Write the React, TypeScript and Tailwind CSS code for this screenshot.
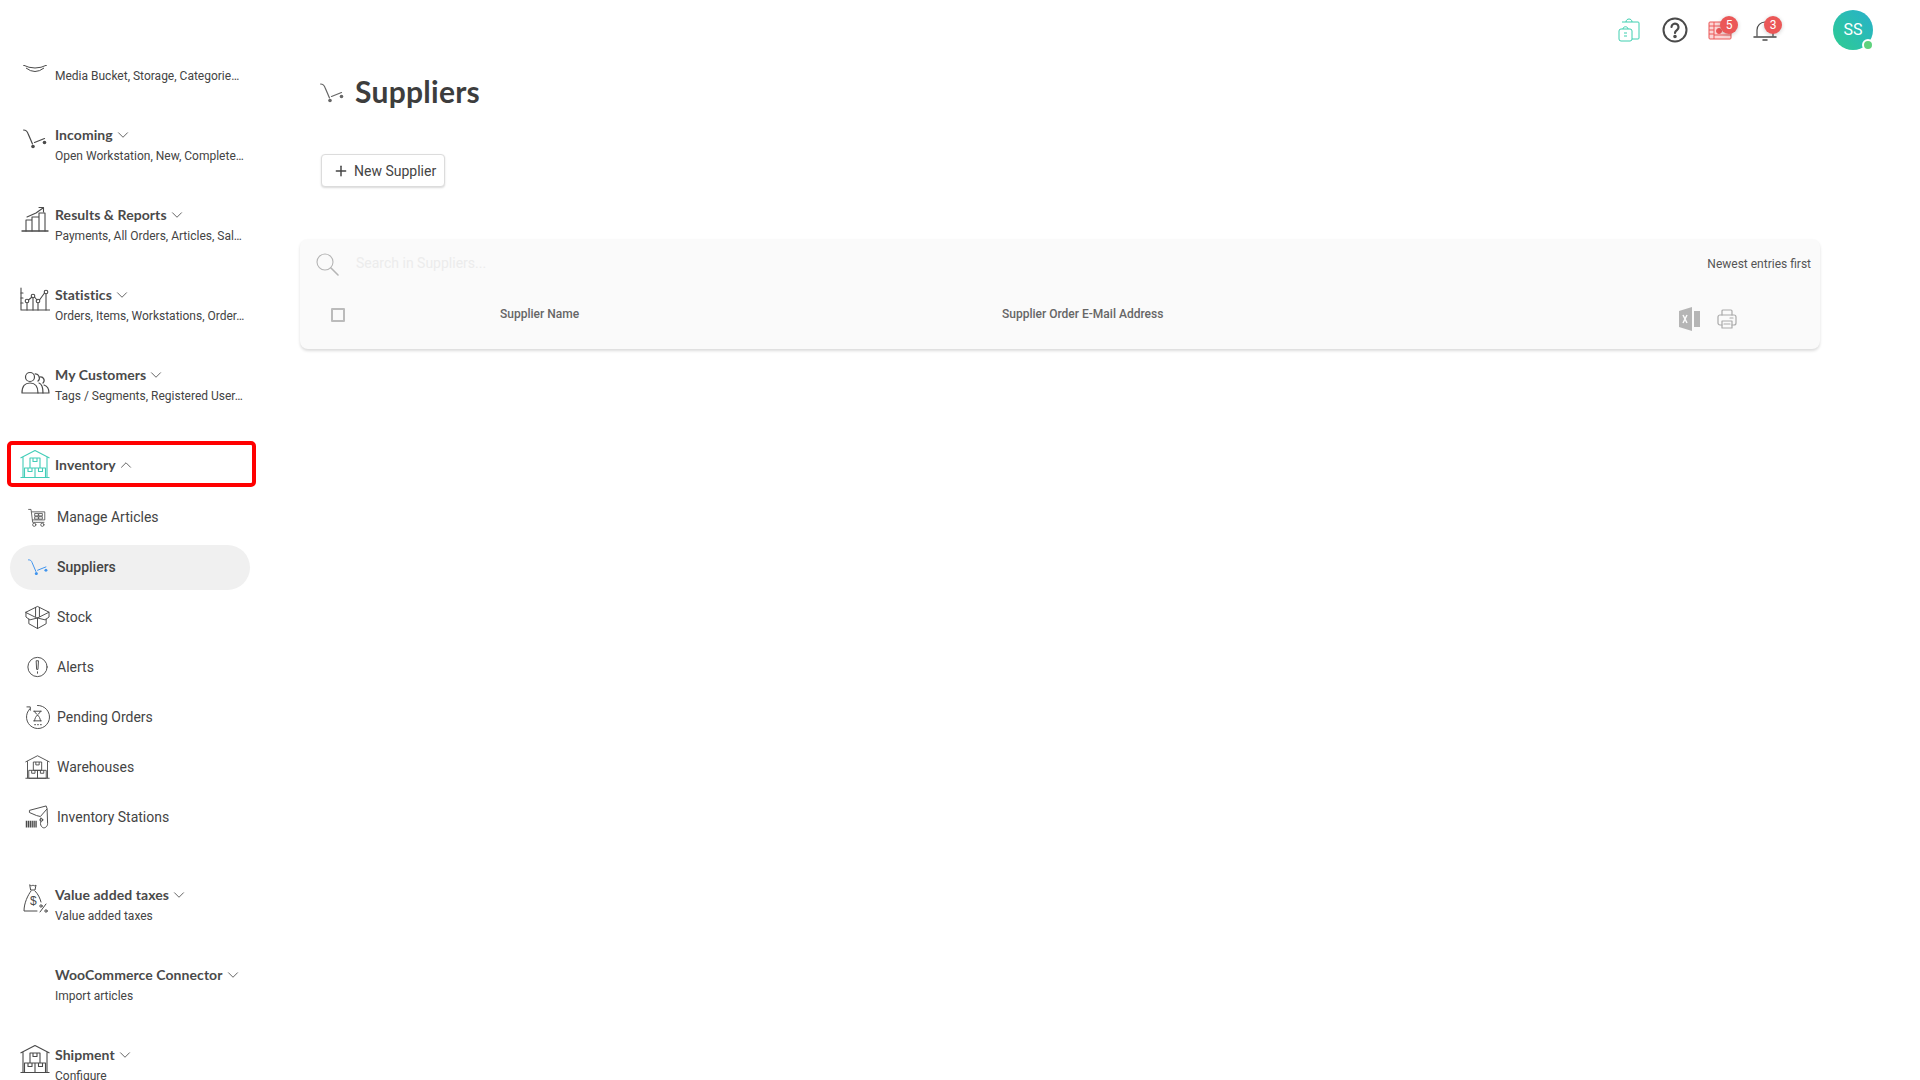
import { ChevronDown, ChevronUp, Plus } from "lucide-react";
import type { ReactNode } from "react";

const INK = "#4a4a4a";

function Svg({ w = 30, h = 30, vb = "0 0 30 30", color = INK, sw = 1, children }: { w?: number; h?: number; vb?: string; color?: string; sw?: number; children: ReactNode }) {
  return (
    <svg width={w} height={h} viewBox={vb} fill="none" stroke={color} strokeWidth={sw} strokeLinecap="round" strokeLinejoin="round">
      {children}
    </svg>
  );
}

function CartIcon({ color = INK, w = 24 }: { color?: string; w?: number }) {
  return (
    <svg width={w} height={(w * 20) / 24} viewBox="0 0 24 20" fill="none" stroke={color} strokeWidth="1.200" strokeLinecap="round">
      <path d="M0.600 1C3 1 4 1.800 5 4.500L9.500 15" />
      <path d="M11.500 13.500L21.500 9.500" />
      <circle cx="10" cy="17.500" r="1.800" fill={color} stroke="none" />
      <circle cx="21.500" cy="13.500" r="1.800" fill={color} stroke="none" />
    </svg>
  );
}

function ChartIcon() {
  return (
    <Svg sw={1.1}>
      <path d="M2 27h26" strokeWidth="1.400" />
      <path d="M6 27V16h6v11M12 27V13h7v14M19 27V9h6v18" />
      <path d="M7 13l9-4 7-5M19 3.500h4.500V8" />
    </Svg>
  );
}

function StatsIcon() {
  return (
    <Svg sw={1.1}>
      <path d="M1 4v22h29" />
      <path d="M1 9h2M1 14h2M1 19h2" />
      <path d="M8.500 16l3.500-3M14.500 13l2.500 3M19.500 16l5-7" />
      <circle cx="7" cy="17" r="1.800" />
      <circle cx="13" cy="12" r="1.800" />
      <circle cx="18" cy="17" r="1.800" />
      <circle cx="26" cy="8" r="1.800" />
      <path d="M7 19v7M13 14v12M18 19v7M26 10v16" />
    </Svg>
  );
}

function PeopleIcon() {
  return (
    <Svg sw={1.2}>
      <circle cx="10" cy="13" r="4.500" />
      <path d="M2 29c0-7 3-10 8-10s8 3 8 10z" />
      <path d="M15 10a4 4 0 0 1 3 7M19 19c3 1 4 5 4 10h-5" />
      <path d="M20 13a3.500 3.500 0 0 1 3 6M24 21c3 1 5 4 5 8h-6" />
    </Svg>
  );
}

function WarehouseIcon({ color = INK, size = 30 }: { color?: string; size?: number }) {
  return (
    <svg width={size} height={size} viewBox="0 0 30 30" fill="none" stroke={color} strokeWidth="1.100" strokeLinejoin="round">
      <path d="M0.500 9L15 1.500 29.500 9M3 8v20.500M27 8v20.500M0.500 28.500h29" />
      <path d="M10 9h10v10H10zM4.500 19h10.500v9.500H4.500zM15 19h10.500v9.500H15z" />
      <path d="M13 9v3.500h4V9M8 19v3.500h4V19M18.500 19v3.500h4V19" />
    </svg>
  );
}

function BasketIcon() {
  return (
    <Svg w={21} h={21} vb="0 0 26 26">
      <path d="M2 3h3l2 16h14" />
      <path d="M6 6h16v10H7" />
      <path d="M10 8h4v3h-4zM15 8h4v3h-4zM10 12h4v3h-4zM15 12h4v3h-4z" />
      <circle cx="9" cy="22" r="2" />
      <circle cx="19" cy="22" r="2" />
    </Svg>
  );
}

function BoxIcon() {
  return (
    <Svg w={26} h={26} vb="0 0 26 26">
      <path d="M1 8l12-6 12 6-12 6z" />
      <path d="M1 8v5l4 3 8-2 8 2 4-3V8" />
      <path d="M4 15v5l9 5 9-5v-5M13 14v11" />
      <path d="M11 3v9.500M15 3v9.500" />
    </Svg>
  );
}

function AlertIcon() {
  return (
    <Svg w={26} h={26} vb="0 0 26 26">
      <circle cx="13" cy="13" r="10" />
      <path d="M12 6.500h2l-0.500 9h-1zM13 18v1.500" />
    </Svg>
  );
}

function PendingIcon() {
  return (
    <Svg w={26} h={26} vb="0 0 26 26">
      <path d="M5 4.500A12 12 0 1 0 13 1" />
      <path d="M2 2.500h3.500V6" />
      <path d="M9 7h8M9 17h8M10 7c0 3 6 4 6 10M16 7c0 3-6 4-6 10" />
      <path d="M10 21h1M13 21h1M16 21h1" />
    </Svg>
  );
}

function ScannerIcon() {
  return (
    <Svg w={26} h={26} vb="0 0 26 26">
      <path d="M5 6L22 1.500l1 3-7 8-4-1-7-3z" />
      <path d="M23 5l0.500 15c0 3-3 5-5 4-2-1-3-4-2-6l0-4" />
      <circle cx="17" cy="16" r="1.500" />
      <path d="M1.500 17v7M3.500 17v7M5.500 17v7M7.500 17v7M9.500 17v7M11.500 17v7" strokeWidth="1.400" strokeLinecap="butt" />
    </Svg>
  );
}

function MoneyIcon() {
  return (
    <Svg w={26} h={30} vb="0 0 26 30">
      <path d="M8 1c1 1 2 1 3 0 1 1 2 1 3 0l-1 5H9z" />
      <path d="M9 7C6 11 2 19 2 27h13" />
      <path d="M13 7c3 3 5 7 6 11" />
      <text x="8" y="21" fontSize="12" fill={INK} stroke="none" fontFamily="Liberation Sans">$</text>
      <path d="M18 28l6-8" />
      <circle cx="19" cy="22" r="1.200" />
      <circle cx="24" cy="27" r="1.200" />
    </Svg>
  );
}

function ExcelIcon() {
  return (
    <svg width="21" height="24" viewBox="0 0 21 24">
      <path d="M0 4l13-4v24L0 20z" fill="#b5b5b5" />
      <rect x="15" y="4" width="6" height="16" fill="#b5b5b5" />
      <path d="M4 8l4 8M8 8l-4 8" stroke="#fafafa" strokeWidth="1.500" />
    </svg>
  );
}

function PrinterIcon() {
  return (
    <Svg w={20} h={20} vb="0 0 20 20" color="#aaa" sw={1.2}>
      <path d="M5 6V2a1 1 0 0 1 1-1h8a1 1 0 0 1 1 1v4" />
      <path d="M5 16H3a2 2 0 0 1-2-2V8a2 2 0 0 1 2-2h14a2 2 0 0 1 2 2v6a2 2 0 0 1-2 2h-2" />
      <path d="M5 12h10v7H5zM7 15h6M13 9h3" />
    </Svg>
  );
}

function Badge({ n, className }: { n: number; className: string }) {
  return (
    <span className={`absolute top-0 flex h-[18px] w-[18px] items-center justify-center rounded-full bg-[#eb5757] text-[12px] leading-none text-white shadow-[0_1px_4px_rgba(0,0,0,0.2)] ${className}`}>
      {n}
    </span>
  );
}

function TopBar() {
  return (
    <header className="flex h-[65px] shrink-0 items-center pb-[5px] pl-[1615px]">
      <span className="mr-[18px] flex h-[28px] w-[28px] items-center justify-center">
        <svg width="22" height="24" viewBox="0 0 22 24" fill="none" stroke="#3ecfb0" strokeWidth="1">
          <path d="M4 4h16a1 1 0 0 1 1 1v15a1 1 0 0 1-1 1h-6" />
          <path d="M8 4c0-4 6-4 6 0" />
          <rect x="1" y="11" width="13" height="12" rx="2" />
          <path d="M5 11c0-3 5-3 5 0M6 15h3M6 18h3" />
        </svg>
      </span>
      <span className="mr-[17px] flex h-[28px] w-[28px] items-center justify-center">
        <svg width="26" height="26" viewBox="0 0 26 26" fill="none" stroke="#4a4a4a" strokeWidth="2" strokeLinecap="round">
          <circle cx="13" cy="13" r="11.500" />
          <path d="M9.500 10a3.500 3.500 0 1 1 5.500 3c-1.300 1-2 1.500-2 3" strokeWidth="2.200" />
          <circle cx="13" cy="19.500" r="0.800" fill="#4a4a4a" />
        </svg>
      </span>
      <span className="relative mr-[17px] flex h-[28px] w-[28px] items-center justify-center">
        <svg width="24" height="20" viewBox="0 0 24 20" fill="#fbd5d5" stroke="#eb5757" strokeWidth="1">
          <rect x="1" y="2" width="22" height="17" rx="1" />
          <path d="M6 2v17M1 6h5M1 10h5M1 14h5M6 6h17M6 15h17" />
          <circle cx="11" cy="11" r="2.500" fill="#eb5757" />
        </svg>
        <Badge n={5} className="right-[-4px]" />
      </span>
      <span className="relative flex h-[28px] w-[28px] items-center justify-center">
        <svg width="24" height="24" viewBox="0 0 24 24" fill="none" stroke="#4a4a4a" strokeWidth="1.200" strokeLinecap="round">
          <path d="M4 18v-6a8 8 0 0 1 16 0v6" />
          <path d="M1 19h22" strokeWidth="1.500" />
          <path d="M10 22h4" strokeWidth="1.500" />
        </svg>
        <Badge n={3} className="right-[-3px]" />
      </span>
      <div className="relative ml-[54px] flex h-[40px] w-[40px] items-center justify-center rounded-full bg-gradient-to-tr from-[#30cc8f] to-[#2ab0ca] text-[16px] text-white">
        SS
        <span className="absolute right-[-1px] bottom-[-1px] h-[12px] w-[12px] rounded-full border-2 border-white bg-[#5fd27d]" />
      </div>
    </header>
  );
}

function NavGroup({ icon, title, sub, height = "h-[80px]" }: { icon?: ReactNode; title?: string; sub: string; height?: string }) {
  return (
    <div className={`flex shrink-0 pl-[20px] ${height}`}>
      <span className="mr-[5px] flex h-[30px] w-[30px] shrink-0 items-center justify-center">{icon}</span>
      <div className="min-w-0">
        <div className="flex h-[20px] items-center text-[14px] font-bold tracking-[0.07px] text-[#4a4a4a] [font-family:Lato,sans-serif]">
          {title}
          {title && <ChevronDown className="ml-[1px] mt-[1px] h-[18px] w-[18px] text-[#555]" strokeWidth={1.2} />}
        </div>
        <div className="mt-[2px] whitespace-nowrap text-[12px] leading-[20px] text-[#444]">{sub}</div>
      </div>
    </div>
  );
}

function SubItem({ icon, label, active }: { icon: ReactNode; label: string; active?: boolean }) {
  return (
    <div className="flex h-[50px] shrink-0 items-center px-[10px]">
      <div className={`flex h-[45px] w-[240px] items-center rounded-full pl-[15px] text-[14px] text-[#444] ${active ? "bg-[#f0f0f0] font-medium" : ""}`}>
        <span className="mr-[7px] flex h-[26px] w-[25px] items-center justify-center">{icon}</span>
        {label}
      </div>
    </div>
  );
}

function Sidebar() {
  return (
    <aside className="flex w-[270px] shrink-0 flex-col overflow-hidden">
      <div className="mt-[-21px] flex flex-col">
        <NavGroup
          icon={
            <svg width="30" height="30" viewBox="0 0 30 30" fill="none" stroke={INK} strokeWidth="1">
              <path d="M3 21Q15 27 27 21M6 24Q15 31 24 24" />
            </svg>
          }
          sub="Media Bucket, Storage, Categorie…"
        />
        <NavGroup icon={<CartIcon />} title="Incoming" sub="Open Workstation, New, Complete…" />
        <NavGroup icon={<ChartIcon />} title="Results & Reports" sub="Payments, All Orders, Articles, Sal…" />
        <NavGroup icon={<StatsIcon />} title="Statistics" sub="Orders, Items, Workstations, Order…" />
        <NavGroup icon={<PeopleIcon />} title="My Customers" sub="Tags / Segments, Registered User…" height="h-[77px]" />
        <div className="ml-[7px] flex h-[46px] w-[249px] shrink-0 items-center rounded-[5px] border-4 border-[#ff0000] pl-[9px]">
          <span className="mr-[5px] flex w-[30px] items-center justify-center">
            <WarehouseIcon color="#43cdb8" />
          </span>
          <span className="text-[14px] font-bold tracking-[0.07px] text-[#4a4a4a] [font-family:Lato,sans-serif]">Inventory</span>
          <ChevronUp className="ml-[1px] mt-[1px] h-[18px] w-[18px] text-[#555]" strokeWidth={1.2} />
        </div>
        <div className="mt-[5px] flex flex-col">
          <SubItem icon={<BasketIcon />} label="Manage Articles" />
          <SubItem icon={<CartIcon color="#3f94ee" w={20} />} label="Suppliers" active />
          <SubItem icon={<BoxIcon />} label="Stock" />
          <SubItem icon={<AlertIcon />} label="Alerts" />
          <SubItem icon={<PendingIcon />} label="Pending Orders" />
          <SubItem icon={<WarehouseIcon size={26} />} label="Warehouses" />
          <SubItem icon={<ScannerIcon />} label="Inventory Stations" />
        </div>
        <div className="mt-[42px] flex flex-col">
          <NavGroup icon={<MoneyIcon />} title="Value added taxes" sub="Value added taxes" />
          <NavGroup title="WooCommerce Connector" sub="Import articles" />
          <NavGroup icon={<WarehouseIcon />} title="Shipment" sub="Configure" />
        </div>
      </div>
    </aside>
  );
}

export default function App() {
  return (
    <div className="flex h-screen w-full flex-col overflow-hidden bg-white text-[#444] [font-family:Roboto,sans-serif]">
      <TopBar />
      <div className="flex min-h-0 flex-1">
        <Sidebar />
        <main className="flex-1 pt-[6px] pr-[100px] pl-[30px]">
          <div className="flex h-[40px] items-center pl-[20px]">
            <span className="mr-[11px] mt-[4px] flex">
              <CartIcon color="#666" />
            </span>
            <h1 className="text-[30px] font-bold tracking-[0.27px] text-[#3d3d3d] [font-family:Lato,sans-serif]">Suppliers</h1>
          </div>
          <button className="mt-[43px] ml-[21px] flex h-[33px] w-[124px] items-center rounded-[4px] border border-[#dcdcdc] bg-white pt-[1px] pl-[11px] text-[14px] text-[#444] shadow-[0_1px_2px_rgba(0,0,0,0.15)]">
            <Plus className="mr-[5px] h-[16px] w-[16px]" strokeWidth={2.2} />
            New Supplier
          </button>
          <section className="mt-[52px] h-[110px] rounded-[8px] bg-[#fafafa] shadow-[0_2px_3px_rgba(0,0,0,0.14)]">
            <div className="flex h-[48px] items-center pr-[9px] pl-[16px]">
              <svg width="23" height="23" viewBox="0 0 23 23" fill="none" stroke="#b5b5b5" strokeWidth="1.100" strokeLinecap="round" className="mt-[2px]">
                <circle cx="9" cy="9" r="8" />
                <path d="M15 15l7 7" strokeWidth="1.600" />
              </svg>
              <input
                placeholder="Search in Suppliers..."
                className="ml-[17px] flex-1 bg-transparent text-[14px] outline-none placeholder:text-[#ececec]"
              />
              <span className="mt-[2px] text-[12px] text-[#555]">Newest entries first</span>
            </div>
            <div className="flex h-[62px] pl-[31px] text-[12px] font-medium text-[#666]">
              <span className="mt-[21px] h-[14px] w-[14px] rounded-[1px] border-2 border-[#bbb]" />
              <span className="ml-[155px] mt-[18px] w-[502px]">Supplier Name</span>
              <span className="mt-[18px] w-[677px]">Supplier Order E-Mail Address</span>
              <span className="mt-[20px] flex items-start gap-[17px]">
                <ExcelIcon />
                <span className="mt-[2px] flex"><PrinterIcon /></span>
              </span>
            </div>
          </section>
        </main>
      </div>
    </div>
  );
}
